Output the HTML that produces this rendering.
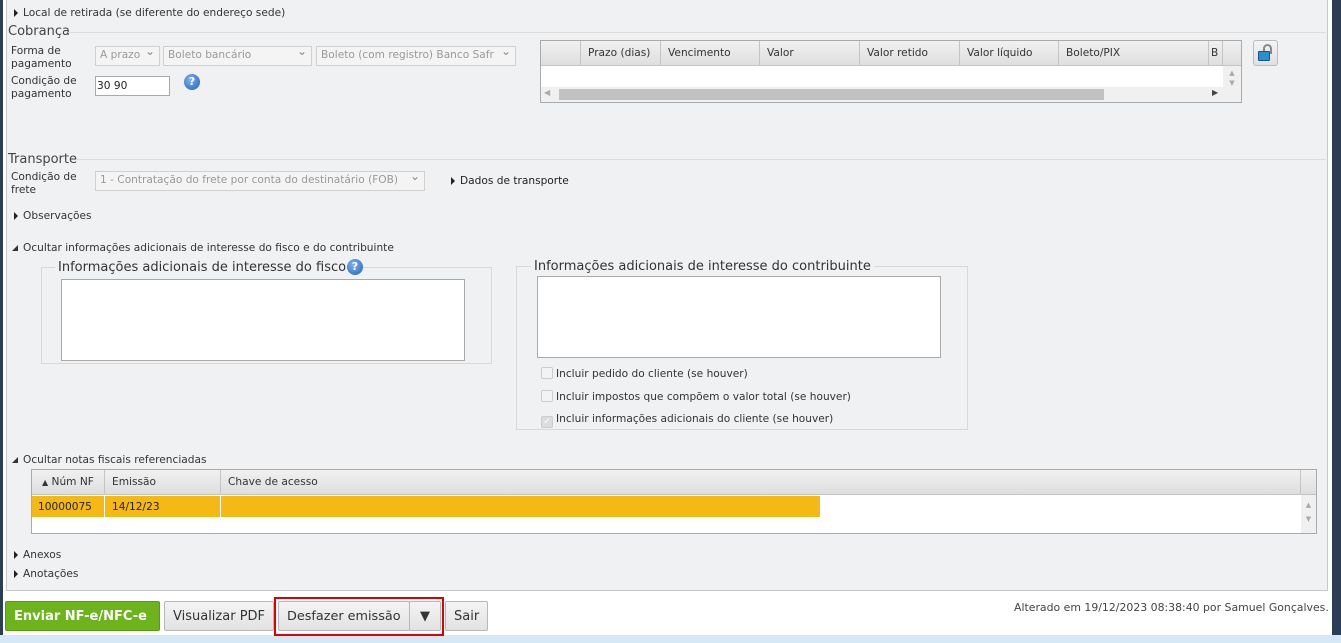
<!DOCTYPE html>
<html><head><meta charset="utf-8"><style>
*{box-sizing:border-box;margin:0;padding:0}
body{width:1341px;height:643px;position:relative;overflow:hidden;background:#fff;font-family:"DejaVu Sans",Verdana,sans-serif;font-size:10.6px;color:#333}
.a{position:absolute;white-space:nowrap}
.panel{position:absolute;left:6px;top:0;width:1322px;height:591px;background:#f0f1f3;border:1px solid #c8c8c8;border-top:none}
.tri{display:inline-block;width:0;height:0;border-left:4px solid #222;border-top:4px solid transparent;border-bottom:4px solid transparent;margin-right:5px;vertical-align:-1px}
.trd{display:inline-block;width:0;height:0;border-right:6px solid #333;border-top:6px solid transparent;margin-right:5px;vertical-align:0}
.sec{font-size:13px;color:#444}
.line{position:absolute;height:1px;background:#dcdcdc}
.sel{position:absolute;height:20px;border:1px solid #d0d0d0;background:#f4f4f4;color:#999;padding:2px 4px;font-size:10.6px;white-space:nowrap;overflow:hidden}
.sel:after{content:"⌄";position:absolute;right:4px;top:-3px;color:#888;font-size:12px}
.help{position:absolute;width:16px;height:16px;border-radius:50%;background:radial-gradient(circle at 40% 35%,#7fb2f0,#1d5fb8);color:#fff;font-weight:bold;font-size:11px;text-align:center;line-height:16px}
.ta{position:absolute;background:#fff;border:1px solid #a9a9a9}
.fs{position:absolute;border:1px solid #d8d8d8}
.cb{display:inline-block;width:12px;height:12px;border:1px solid #ccc;background:#f3f3f3;border-radius:2px;vertical-align:-2px;margin-right:3px}
.th{position:absolute;top:0;height:24px;border-right:1px solid #c4c4c4;padding:6px 7px;font-size:10.6px;color:#333;white-space:nowrap}
.btn{position:absolute;top:601px;height:30px;border:1px solid #b8b8b8;background:linear-gradient(#f4f4f4,#e2e2e2);font-size:13px;color:#333;padding:7px 8px;border-radius:2px;white-space:nowrap}
</style></head><body>
<div class="a" style="left:0;top:0;width:3px;height:643px;background:#2c3e55"></div>
<div class="a" style="left:1332px;top:0;width:9px;height:643px;background:#2c3e55"></div>
<div class="panel"></div>
<div class="a" style="left:0;top:635px;width:1341px;height:8px;background:#d6e8f5"></div>

<div class="a" style="left:14px;top:7px"><span class="tri"></span>Local de retirada (se diferente do endereço sede)</div>
<div class="a sec" style="left:8px;top:24px">Cobrança</div>
<div class="line" style="left:68px;top:32px;width:1258px"></div>
<div class="a" style="left:11px;top:45px;line-height:13px">Forma de<br>pagamento</div>
<div class="sel" style="left:95px;top:46px;width:65px">A prazo</div>
<div class="sel" style="left:163px;top:46px;width:149px">Boleto bancário</div>
<div class="sel" style="left:316px;top:46px;width:200px">Boleto (com registro) Banco Safr</div>
<div class="a" style="left:11px;top:75px;line-height:13px">Condição de<br>pagamento</div>
<div class="a" style="left:95px;top:76px;width:75px;height:20px;background:#fff;border:1px solid #a9a9a9;padding:3px 1px;color:#222">30 90</div>
<div class="help" style="left:184px;top:74px">?</div>

<div class="a" style="left:540px;top:40px;width:702px;height:63px;border:1px solid #aaa;background:#fff">
 <div class="a" style="left:0;top:0;width:700px;height:25px;background:linear-gradient(#f1f1f1,#dedede);border-bottom:1px solid #c4c4c4"></div>
 <div class="th" style="left:0;width:40px"></div>
 <div class="th" style="left:40px;width:80px">Prazo (dias)</div>
 <div class="th" style="left:120px;width:99px">Vencimento</div>
 <div class="th" style="left:219px;width:100px">Valor</div>
 <div class="th" style="left:319px;width:100px">Valor retido</div>
 <div class="th" style="left:419px;width:99px">Valor líquido</div>
 <div class="th" style="left:518px;width:150px">Boleto/PIX</div>
 <div class="th" style="left:668px;width:14px;padding-left:2px">B</div>
 <div class="a" style="left:682px;top:25px;width:18px;height:36px;background:#f0f0f0;color:#aaa;font-size:7px;text-align:center;line-height:10px;padding-top:2px">▲<br>▼</div>
 <div class="a" style="left:0;top:46px;width:682px;height:15px;background:#f0f0f0"></div>
 <div class="a" style="left:18px;top:48px;width:545px;height:11px;background:#c1c1c1"></div>
 <div class="a" style="left:3px;top:47px;color:#aaa;font-size:8px">◀</div>
 <div class="a" style="left:671px;top:47px;color:#444;font-size:8px">▶</div>
</div>
<div class="a" style="left:1253px;top:40px;width:25px;height:26px;border:1px solid #bbb;border-radius:3px;background:linear-gradient(#f4f4f4,#e0e0e0)">
 <div class="a" style="left:9px;top:3px;width:9px;height:10px;border:2px solid #888;border-bottom:none;border-radius:5px 5px 0 0"></div>
 <div class="a" style="left:4px;top:10px;width:12px;height:10px;background:#2a8fd0;border:1px solid #105a8a;border-radius:1px"></div>
</div>

<div class="a sec" style="left:8px;top:152px">Transporte</div>
<div class="line" style="left:76px;top:159px;width:1250px"></div>
<div class="a" style="left:11px;top:171px;line-height:13px">Condição de<br>frete</div>
<div class="sel" style="left:95px;top:171px;width:330px">1 - Contratação do frete por conta do destinatário (FOB)</div>
<div class="a" style="left:451px;top:175px;color:#222"><span class="tri"></span>Dados de transporte</div>

<div class="a" style="left:14px;top:210px"><span class="tri"></span>Observações</div>
<div class="a" style="left:12px;top:242px"><span class="trd"></span>Ocultar informações adicionais de interesse do fisco e do contribuinte</div>

<div class="fs" style="left:41px;top:267px;width:451px;height:97px"></div>
<div class="a" style="left:55px;top:260px;background:#f0f1f3;padding:0 3px;font-size:13px;color:#333">Informações adicionais de interesse do fisco</div>
<div class="help" style="left:347px;top:259px">?</div>
<div class="ta" style="left:61px;top:279px;width:404px;height:82px"></div>

<div class="fs" style="left:516px;top:266px;width:452px;height:164px"></div>
<div class="a" style="left:531px;top:259px;background:#f0f1f3;padding:0 3px;font-size:13px;color:#333">Informações adicionais de interesse do contribuinte</div>
<div class="ta" style="left:537px;top:276px;width:404px;height:82px"></div>
<div class="a" style="left:541px;top:367px"><span class="cb"></span>Incluir pedido do cliente (se houver)</div>
<div class="a" style="left:541px;top:390px"><span class="cb"></span>Incluir impostos que compõem o valor total (se houver)</div>
<div class="a" style="left:541px;top:413px"><span class="cb" style="background:#ddd;color:#fff;font-size:9px;line-height:10px;text-align:center">✓</span>Incluir informações adicionais do cliente (se houver)</div>

<div class="a" style="left:12px;top:454px"><span class="trd"></span>Ocultar notas fiscais referenciadas</div>
<div class="a" style="left:31px;top:469px;width:1286px;height:65px;border:1px solid #aaa;background:#fff">
 <div class="a" style="left:0;top:0;width:1284px;height:25px;background:linear-gradient(#f1f1f1,#dedede);border-bottom:1px solid #c4c4c4"></div>
 <div class="th" style="left:0;width:73px;padding-left:10px"><span style="font-size:8px">▲</span> Núm NF</div>
 <div class="th" style="left:73px;width:116px">Emissão</div>
 <div class="th" style="left:189px;width:1080px">Chave de acesso</div>
 <div class="a" style="left:0;top:26px;width:788px;height:21px;background:#f4b914"></div>
 <div class="a" style="left:72px;top:26px;width:1px;height:21px;background:#fff"></div>
 <div class="a" style="left:188px;top:26px;width:1px;height:21px;background:#fff"></div>
 <div class="a" style="left:6px;top:31px;color:#222">10000075</div>
 <div class="a" style="left:80px;top:31px;color:#222">14/12/23</div>
 <div class="a" style="left:1269px;top:25px;width:15px;height:38px;background:#f0f0f0;color:#aaa;font-size:7px;text-align:center;line-height:14px;padding-top:3px">▲<br>▼</div>
</div>

<div class="a" style="left:14px;top:549px"><span class="tri"></span>Anexos</div>
<div class="a" style="left:14px;top:568px"><span class="tri"></span>Anotações</div>

<div class="btn" style="left:5px;width:155px;background:#6cb31c;border-color:#5a9a12;color:#fff;font-weight:bold;padding-left:8px">Enviar NF-e/NFC-e</div>
<div class="btn" style="left:164px;width:110px">Visualizar PDF</div>
<div class="a" style="left:274px;top:597px;width:170px;height:39px;border:2px solid #e00000"></div>
<div class="btn" style="left:278px;width:132px;padding-left:8px;font-size:12.8px">Desfazer emissão</div>
<div class="btn" style="left:409px;width:32px;text-align:center;padding:7px 0">▼</div>
<div class="btn" style="left:445px;width:43px">Sair</div>
<div class="a" style="left:1014px;top:601px;color:#444;font-size:10.9px">Alterado em 19/12/2023 08:38:40 por Samuel Gonçalves.</div>
</body></html>
